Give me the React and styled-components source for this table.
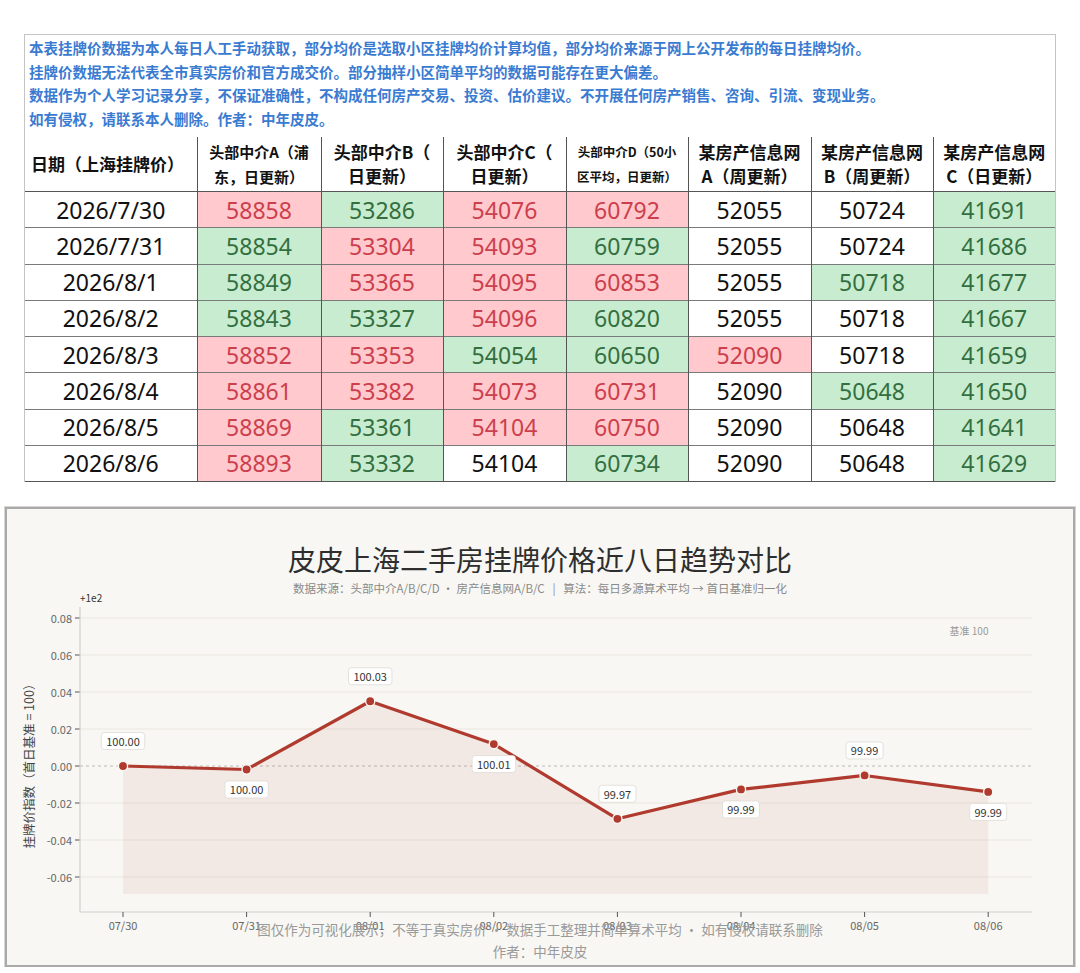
import React from "react";
import styled, { createGlobalStyle } from "styled-components";

const GlobalStyle = createGlobalStyle`
  body {
    margin: 0;
    background: #ffffff;
    font-family: "Noto Sans", "Noto Sans CJK SC", sans-serif;
  }
`;

const notes = [
  "本表挂牌价数据为本人每日人工手动获取，部分均价是选取小区挂牌均价计算均值，部分均价来源于网上公开发布的每日挂牌均价。",
  "挂牌价数据无法代表全市真实房价和官方成交价。部分抽样小区简单平均的数据可能存在更大偏差。",
  "数据作为个人学习记录分享，不保证准确性，不构成任何房产交易、投资、估价建议。不开展任何房产销售、咨询、引流、变现业务。",
  "如有侵权，请联系本人删除。作者：中年皮皮。",
];

const dates = [
  "2026/7/30",
  "2026/7/31",
  "2026/8/1",
  "2026/8/2",
  "2026/8/3",
  "2026/8/4",
  "2026/8/5",
  "2026/8/6",
];

// one entry per source column
const sources = [
  { head: ["头部中介A（浦", "东，日更新）"], size: 15, width: 124, first: "up",
    values: [58858, 58854, 58849, 58843, 58852, 58861, 58869, 58893] },
  { head: ["头部中介B（", "日更新）"], size: 17, width: 122, first: "down",
    values: [53286, 53304, 53365, 53327, 53353, 53382, 53361, 53332] },
  { head: ["头部中介C（", "日更新）"], size: 17, width: 123, first: "up",
    values: [54076, 54093, 54095, 54096, 54054, 54073, 54104, 54104] },
  { head: ["头部中介D（50小", "区平均，日更新）"], size: 12.5, width: 122, first: "up",
    values: [60792, 60759, 60853, 60820, 60650, 60731, 60750, 60734] },
  { head: ["某房产信息网", "A（周更新）"], size: 17, width: 123, first: "flat",
    values: [52055, 52055, 52055, 52055, 52090, 52090, 52090, 52090] },
  { head: ["某房产信息网", "B（周更新）"], size: 17, width: 122, first: "flat",
    values: [50724, 50724, 50718, 50718, 50718, 50648, 50648, 50648] },
  { head: ["某房产信息网", "C（日更新）"], size: 17, width: 122, first: "down",
    values: [41691, 41686, 41677, 41667, 41659, 41650, 41641, 41629] },
];

const toneOf = (src, i) => {
  if (i === 0) return src.first;
  const d = src.values[i] - src.values[i - 1];
  return d > 0 ? "up" : d < 0 ? "down" : "flat";
};

const tones = {
  up: { bg: "#ffc9cd", fg: "#cc3f4c" },
  down: { bg: "#c8eccf", fg: "#336f40" },
  flat: { bg: "#ffffff", fg: "#111111" },
};

const Page = styled.div`
  padding-top: 34px;
  display: flex;
  flex-direction: column;
`;

const Sheet = styled.div`
  margin: 0 24px;
  width: 1032px;
  box-sizing: border-box;
  border: 1px solid #c4c4c4;
  border-bottom: none;
`;

const Notes = styled.div`
  padding: 1px 4px 7px;
  color: #3a7bd2;
  font-family: "Noto Sans CJK SC", sans-serif;
  font-weight: 700;
  font-size: 14.5px;
  line-height: 23.5px;
`;

const Table = styled.table`
  width: 1030px;
  table-layout: fixed;
  border-collapse: collapse;
  border-bottom: 1px solid #555;
`;

const HeadCell = styled.th`
  height: 54px;
  padding: 0 4px 0 ${(p) => (p.$left ? "6px" : "4px")};
  text-align: ${(p) => (p.$left ? "left" : "center")};
  font-family: "Noto Sans CJK SC", sans-serif;
  font-weight: 700;
  font-size: ${(p) => p.$size}px;
  line-height: ${(p) => (p.$size < 16 ? 25 : 24)}px;
  color: #111;
  border-bottom: 1px solid #555;
  border-left: ${(p) => (p.$left ? "none" : "1px solid #555")};
  white-space: nowrap;
  overflow: hidden;
`;

const Row = styled.tr`
  height: 36.25px;
  & + & td {
    border-top: 1px solid #7a7a7a;
  }
`;

const Cell = styled.td`
  padding: 0;
  text-align: center;
  font-family: "Noto Sans", sans-serif;
  font-size: 23px;
  line-height: 30px;
  background: ${(p) => tones[p.$tone].bg};
  color: ${(p) => tones[p.$tone].fg};
  border-left: ${(p) => (p.$first ? "none" : "1px solid #555")};
`;

const ChartFrame = styled.div`
  margin: 25px 0 0 5px;
  width: 1070px;
  height: 460px;
  box-sizing: border-box;
  border: 2px solid #a9a9a9;
  box-shadow: 0 0 0 1px #d6d6d6;
  background: #f8f7f3;
  display: flex;
  flex-direction: column;
  align-items: center;
  padding: 33px 0 3px;
  font-family: "Noto Sans CJK SC", sans-serif;
`;

const Title = styled.h1`
  margin: 0;
  font-size: 28px;
  line-height: 34px;
  font-weight: 400;
  color: #2e2e2e;
`;

const Subtitle = styled.div`
  margin-top: 4px;
  font-size: 11.5px;
  line-height: 16px;
  color: #8a8a8a;
  white-space: pre;
`;

const Plot = styled.svg`
  display: block;
  overflow: visible;
  font-family: "Noto Sans CJK SC", sans-serif;
`;

const Footer = styled.div`
  font-size: 13.5px;
  line-height: 22px;
  color: #9a9a9a;
  text-align: center;
`;

// chart geometry in page coordinates
const X0 = 123;
const DX = 123.6;
const Y0 = 766;
const PER = 1850; // px per index point
const LEFT = 80;
const RIGHT = 1032;
const BOTTOM = 912;
const BASE = 894;

const sums = dates.map((_, i) => sources.reduce((s, src) => s + src.values[i], 0));
const index = sums.map((s) => (s / sums[0]) * 100);
const points = index.map((v, i) => ({
  x: X0 + i * DX,
  y: Y0 - (v - 100) * PER,
  label: v.toFixed(2),
  above: i % 2 === 0,
  tick: dates[i].slice(5).split("/").map((n) => n.padStart(2, "0")).join("/"),
}));

const yTicks = [0.08, 0.06, 0.04, 0.02, 0, -0.02, -0.04, -0.06];

const TrendChart = () => {
  const line = points.map((p) => `${p.x},${p.y}`).join(" ");
  const area = `${line} ${points[points.length - 1].x},${BASE} ${points[0].x},${BASE}`;
  return (
    <Plot width="1066" height="322" viewBox="7 596 1066 322">
      {yTicks.map((t) => {
        const y = Y0 - t * PER;
        return (
          <g key={t}>
            {t !== 0 && <line x1={LEFT} x2={RIGHT} y1={y} y2={y} stroke="#ebe7df" strokeWidth="1" />}
            <line x1={LEFT - 5} x2={LEFT} y1={y} y2={y} stroke="#555" strokeWidth="1" />
            <text x={LEFT - 8} y={y} textAnchor="end" dominantBaseline="central" fontSize="11" fill="#666">
              {t.toFixed(2)}
            </text>
          </g>
        );
      })}
      <line x1={LEFT} x2={RIGHT} y1={Y0} y2={Y0} stroke="#bdbab4" strokeWidth="1" strokeDasharray="3 3" />
      <polygon points={area} fill="rgba(176, 58, 46, 0.07)" />
      <line x1={LEFT} x2={LEFT} y1="607" y2={BOTTOM} stroke="#cfcfcf" strokeWidth="1.2" />
      <line x1={LEFT} x2={RIGHT} y1={BOTTOM} y2={BOTTOM} stroke="#cfcfcf" strokeWidth="1.2" />
      <text x={LEFT} y="602" fontSize="10" fill="#333">+1e2</text>
      <text x="969" y="630" textAnchor="middle" dominantBaseline="central" fontSize="10" fill="#9a9a9a">
        基准 100
      </text>
      <text
        x="28"
        y="763"
        transform="rotate(-90 28 763)"
        textAnchor="middle"
        dominantBaseline="central"
        fontSize="12.5"
        fill="#444"
      >
        挂牌价指数（首日基准 = 100）
      </text>
      <polyline points={line} fill="none" stroke="#b03a2e" strokeWidth="3.2" strokeLinejoin="round" strokeLinecap="round" />
      {points.map((p) => (
        <g key={p.tick}>
          <circle cx={p.x} cy={p.y} r="4.6" fill="#b03a2e" stroke="#f8f7f3" strokeWidth="1.4" />
          <line x1={p.x} x2={p.x} y1={BOTTOM} y2={BOTTOM + 5} stroke="#555" strokeWidth="1" />
          <text x={p.x} y="925" textAnchor="middle" dominantBaseline="central" fontSize="11" fill="#666">
            {p.tick}
          </text>
        </g>
      ))}
      {points.map((p) => {
        const cy = p.above ? p.y - 25 : p.y + 20;
        const w = p.label.length * 6.4 + 5;
        return (
          <g key={`l${p.tick}`}>
            <rect x={p.x - w / 2} y={cy - 8.5} width={w} height="17" rx="3" fill="#ffffff" stroke="#dedbd5" strokeWidth="0.8" />
            <text x={p.x} y={cy} textAnchor="middle" dominantBaseline="central" fontSize="11" fill="#333">
              {p.label}
            </text>
          </g>
        );
      })}
    </Plot>
  );
};

const App = () => (
  <>
    <GlobalStyle />
    <Page>
      <Sheet>
        <Notes>
          {notes.map((n) => (
            <div key={n}>{n}</div>
          ))}
        </Notes>
        <Table>
          <colgroup>
            <col style={{ width: 172 }} />
            {sources.map((s, i) => (
              <col key={i} style={{ width: s.width }} />
            ))}
          </colgroup>
          <thead>
            <tr>
              <HeadCell $left $size={17}>日期（上海挂牌价）</HeadCell>
              {sources.map((s, i) => (
                <HeadCell key={i} $size={s.size}>
                  {s.head[0]}
                  <br />
                  {s.head[1]}
                </HeadCell>
              ))}
            </tr>
          </thead>
          <tbody>
            {dates.map((d, i) => (
              <Row key={d}>
                <Cell $first $tone="flat">{d}</Cell>
                {sources.map((s, j) => (
                  <Cell key={j} $tone={toneOf(s, i)}>
                    {s.values[i]}
                  </Cell>
                ))}
              </Row>
            ))}
          </tbody>
        </Table>
      </Sheet>
      <ChartFrame>
        <Title>皮皮上海二手房挂牌价格近八日趋势对比</Title>
        <Subtitle>{"数据来源：头部中介A/B/C/D · 房产信息网A/B/C   |   算法：每日多源算术平均 → 首日基准归一化"}</Subtitle>
        <TrendChart />
        <Footer>
          图仅作为可视化展示，不等于真实房价 · 数据手工整理并简单算术平均 · 如有侵权请联系删除
          <br />
          作者：中年皮皮
        </Footer>
      </ChartFrame>
    </Page>
  </>
);

export default App;
